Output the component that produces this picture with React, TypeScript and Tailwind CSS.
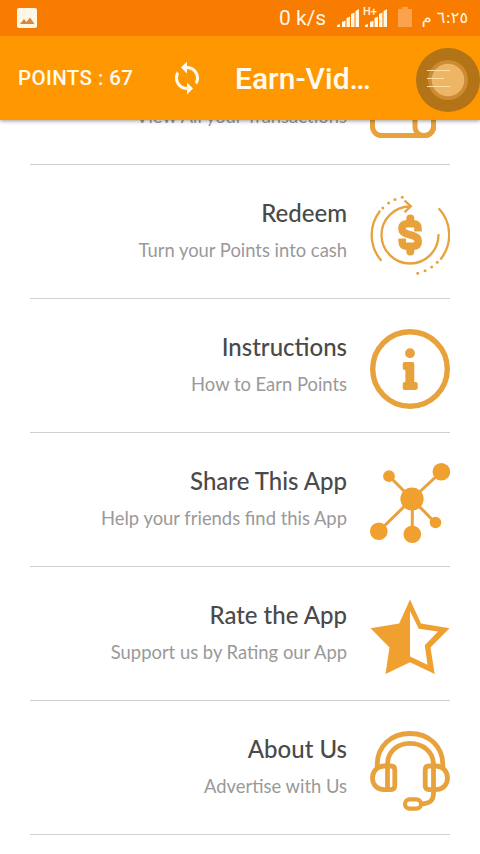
import React from 'react';

interface MenuItem {
  title?: string;
  subtitle: string;
  icon: React.ReactNode;
}

const WalletIcon = () => (
  <svg viewBox="0 0 80 80" className="w-20 h-20 shrink-0" fill="none" stroke="#e8a23c" strokeWidth="5">
    <rect x="2.5" y="10" width="61" height="64.5" rx="9" />
    <rect x="45" y="50" width="18.5" height="24.5" rx="8.5" />
  </svg>
);

const RedeemIcon = () => (
  <svg viewBox="0 0 80 80" className="w-20 h-20 shrink-0" fill="none" stroke="#e8a23c" strokeWidth="2.3" strokeLinecap="round">
    <path d="M9.6 16.5A38.8 38.8 0 0 0 10.8 65" />
    <path d="M69.3 14A38.8 38.8 0 0 1 71 63.7" />
    <path d="M40 11.5A28.5 28.5 0 1 0 68.5 40" />
    <path d="M35.2 6.2l5.6 5.1-5.6 5.3" />
    <g fill="#e8a23c" stroke="none">
      <circle cx="12.8" cy="13" r="1.5" />
      <circle cx="18.6" cy="8" r="1.5" />
      <circle cx="25" cy="4.4" r="1.5" />
      <circle cx="32.3" cy="2.2" r="1.5" />
      <circle cx="67.3" cy="67.3" r="1.5" />
      <circle cx="61.7" cy="72" r="1.5" />
      <circle cx="55" cy="75.8" r="1.5" />
      <circle cx="47.7" cy="78.2" r="1.5" />
    </g>
    <path d="M40.3 23.5v2.500M40.300 54v2.500" strokeWidth="8" />
    <path
      d="M48 36.5V33.5Q48 28.8 43 28.800H37.500Q32 28.800 32 33.500Q32 37.600 37 38.800L43.500 40.800Q48.200 42.200 48.200 46.200Q48.200 51.200 43 51.200H37.500Q32.200 51.200 32.200 46.500V43.500"
      strokeWidth="7.6"
      strokeLinecap="butt"
    />
  </svg>
);

const InfoIcon = () => (
  <svg viewBox="0 0 80 80" className="w-20 h-20 shrink-0" fill="#e8a23c">
    <circle cx="40" cy="40" r="37.3" fill="none" stroke="#e8a23c" strokeWidth="5.4" />
    <circle cx="40" cy="24.2" r="4.9" />
    <rect x="32.7" y="33" width="11.3" height="8" rx="2" />
    <rect x="35.4" y="33" width="8.9" height="25" rx="2" />
    <rect x="32.7" y="53" width="15" height="8" rx="2" />
  </svg>
);

const ShareIcon = () => (
  <svg viewBox="0 0 80 80" className="w-20 h-20 shrink-0" fill="#f0a02f">
    <path d="M19 13L42 36L71 9M42 36L65 59.5M42 36L9 68M42.3 36V71" stroke="#e8a23c" strokeWidth="3" fill="none" />
    <circle cx="42" cy="36" r="11.6" />
    <circle cx="71.3" cy="8.8" r="8.8" />
    <circle cx="19" cy="13.2" r="5.9" />
    <circle cx="65.5" cy="59.5" r="5.8" />
    <circle cx="8.8" cy="68.2" r="8.8" />
    <circle cx="42.3" cy="71.2" r="8.8" />
  </svg>
);

const StarIcon = () => (
  <svg viewBox="0 0 80 80" className="w-20 h-20 shrink-0" fill="#f0a02f">
    <path
      fillRule="evenodd"
      d="M40 2.5L51 26.5L79.5 31.3L60.5 50.5L64.7 77L40 65.3L15.5 77L19.5 50.5L0.5 31.3L29.2 26.5ZM40 14V59.5L57.5 67.8L54.8 48.2L68 34.5L48.8 31.8Z"
    />
  </svg>
);

const HeadsetIcon = () => (
  <svg viewBox="0 0 80 80" className="w-20 h-20 shrink-0" fill="none" stroke="#e8a23c" strokeWidth="4.8">
    <path d="M7.2 36V33.5C7.2 15.5 21 2.5 40 2.5S72.8 15.5 72.8 33.5V36" />
    <path d="M17.5 59V33.5C17.5 21 27 12.3 40 12.3S63.5 21 63.5 33.5V62C63.5 69.5 60 72.8 51 72.8" />
    <path d="M17.5 35H21Q24.8 35 24.8 39V54.5Q24.8 58.6 21 58.6H14C7 58.6 2.5 53.5 2.5 47S7 35 14 35Z" />
    <path d="M62.5 35H59Q55.2 35 55.2 39V54.5Q55.2 58.6 59 58.6H66C73 58.6 77.5 53.5 77.5 47S73 35 66 35Z" />
    <rect x="35" y="68.3" width="16" height="9.3" rx="4.6" strokeWidth="4.2" />
  </svg>
);

const menuItems: MenuItem[] = [
  { subtitle: 'View All your Transactions', icon: <WalletIcon /> },
  { title: 'Redeem', subtitle: 'Turn your Points into cash', icon: <RedeemIcon /> },
  { title: 'Instructions', subtitle: 'How to Earn Points', icon: <InfoIcon /> },
  { title: 'Share This App', subtitle: 'Help your friends find this App', icon: <ShareIcon /> },
  { title: 'Rate the App', subtitle: 'Support us by Rating our App', icon: <StarIcon /> },
  { title: 'About Us', subtitle: 'Advertise with Us', icon: <HeadsetIcon /> },
];

const SignalBars = () => (
  <svg viewBox="0 0 22 18" className="w-[22px] h-[18px]" fill="#fff6e6">
    <path d="M0 18v-2l3-1v3zM5 18v-5l3.5-1.5v6.5zM9.5 18V9l3.5-1.5V18zM14 18V5l3.5-1.5V18zM18.5 18V2l3.5-2v18z" />
  </svg>
);

const StatusBar = () => (
  <div className="h-9 bg-[#f77c00] flex items-center text-[#fff6e6]">
    <svg viewBox="0 0 20 20" className="w-5 h-5 ml-[17px]">
      <rect width="20" height="20" rx="2" fill="#fff6e6" />
      <path d="M3 16l4-5 2.500 3 3.500-4.500 4.500 6.500z" fill="#d98a35" />
    </svg>
    <span className="ml-[242px] w-[48px] text-[21px] leading-none whitespace-nowrap pt-px">0 k/s</span>
    <div className="flex ml-[10px] -mt-px relative">
      <SignalBars />
      <div className="ml-[6px]">
        <SignalBars />
      </div>
      <span className="absolute left-[26px] -top-[2px] bg-[#f77c00] text-[11px] font-medium leading-[10px]">H+</span>
    </div>
    <svg viewBox="0 0 14 20" className="w-[14px] h-5 ml-[11px] -mt-[3px]" fill="#fba24d">
      <path d="M4 0h6v2h4v18H0V2h4z" />
    </svg>
    <span dir="rtl" className="ml-[10px] w-[46px] text-[16px] leading-none whitespace-nowrap font-['DejaVu_Sans',sans-serif]">
      ٦:٢٥ م
    </span>
  </div>
);

const AppBar = () => (
  <div className="h-[84px] bg-[#ff9800] flex items-center text-[#fffaf0] relative">
    <span className="ml-[18px] w-[116px] text-[20.5px] tracking-[0.4px] font-medium whitespace-nowrap">POINTS : 67</span>
    <svg viewBox="0 0 24 24" className="w-9 h-9 ml-[35px]" fill="currentColor">
      <path d="M12 4V1L8 5l4 4V6c3.31 0 6 2.69 6 6 0 1.01-.25 1.97-.7 2.8l1.46 1.46C19.54 15.03 20 13.57 20 12c0-4.42-3.58-8-8-8zm0 14c-3.31 0-6-2.69-6-6 0-1.01.25-1.97.7-2.8L5.24 7.74C4.46 8.97 4 10.43 4 12c0 4.42 3.58 8 8 8v3l4-4-4-4v3z" />
    </svg>
    <h1 className="ml-[30px] text-[30px] font-medium whitespace-nowrap">Earn-Vid…</h1>
    {/* Floating touch button over the menu icon */}
    <svg viewBox="0 0 64 64" className="absolute left-[416px] top-3 w-16 h-16">
      <circle cx="32" cy="32" r="32" fill="#b37417" />
      <circle cx="32" cy="32" r="20" fill="#cd8b34" />
      <circle cx="32" cy="32" r="16.3" fill="#edb564" />
      <path d="M11 22.5h23M11 30.5h17M11 38.5h23" stroke="#ffdfa5" strokeWidth="1.1" />
    </svg>
  </div>
);

const App: React.FC = () => {
  return (
    <div className="w-[480px] h-[854px] bg-white overflow-hidden flex flex-col font-['Roboto',sans-serif]">
      <header className="relative z-10 shrink-0 shadow-[0_1px_4px_rgba(0,0,0,0.4)]">
        <StatusBar />
        <AppBar />
      </header>

      {/* List is scrolled, so the first row sits partly under the app bar */}
      <main className="flex-1 overflow-hidden px-[30px] font-['Lato',sans-serif]">
        <div className="-mt-[89px]">
          {menuItems.map((item) => (
            <div key={item.subtitle} className="h-[134px] pt-[30px] flex items-start border-b border-[#d0d0d0]">
              <div className="flex-1 text-right pr-[23px]">
                <h2 className="h-9 text-[24px] leading-9 font-medium text-[#4a4a4a]">{item.title}</h2>
                <p className="mt-[7px] text-[18.4px] leading-6 text-[#999999]">{item.subtitle}</p>
              </div>
              {item.icon}
            </div>
          ))}
        </div>
      </main>
    </div>
  );
};

export default App;
